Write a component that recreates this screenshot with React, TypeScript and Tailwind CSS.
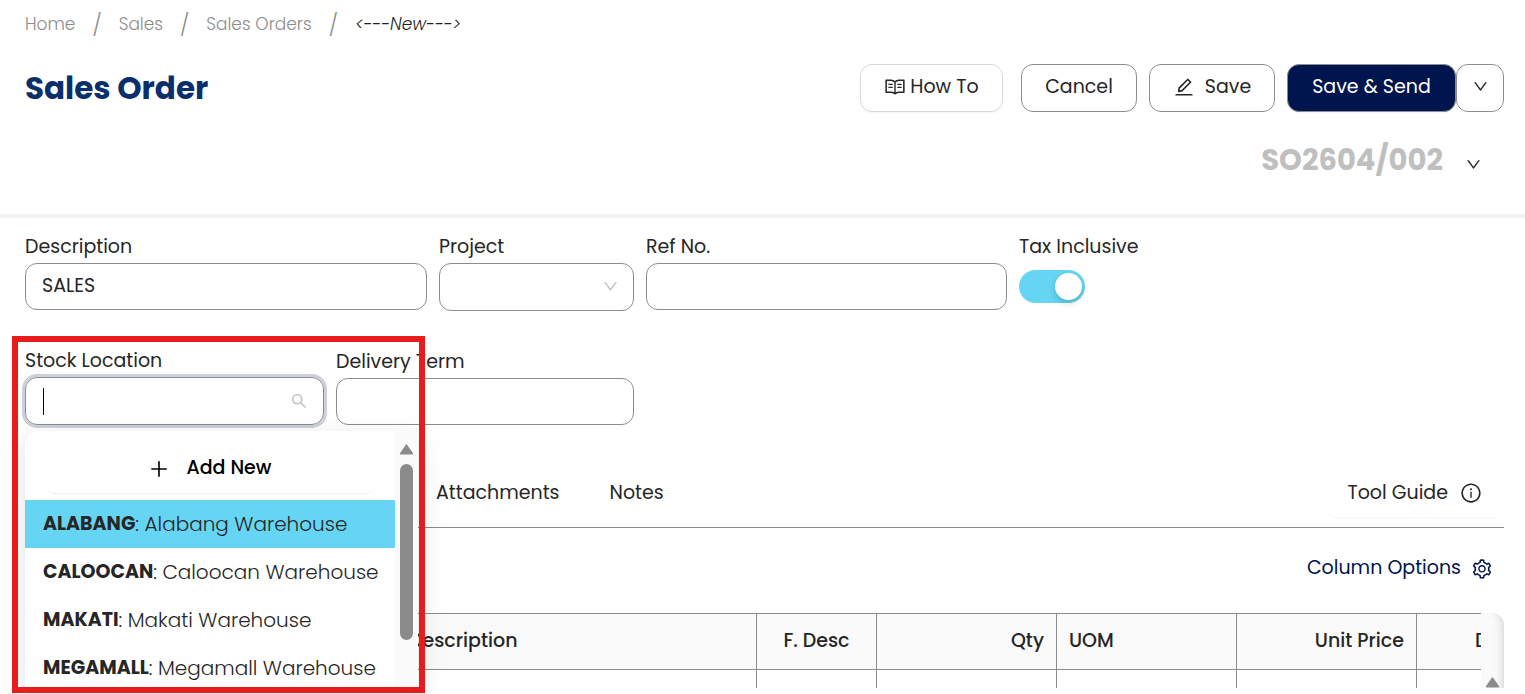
import type { ReactNode } from "react";
import {
  AiOutlineDown,
  AiOutlineEdit,
  AiOutlineInfoCircle,
  AiOutlinePlus,
  AiOutlineRead,
  AiOutlineSearch,
  AiOutlineSetting,
} from "react-icons/ai";

const crumbs = ["Home", "Sales", "Sales Orders"];

const warehouses = [
  { code: "ALABANG", name: "Alabang Warehouse" },
  { code: "CALOOCAN", name: "Caloocan Warehouse" },
  { code: "MAKATI", name: "Makati Warehouse" },
  { code: "MEGAMALL", name: "Megamall Warehouse" },
];

function Triangle() {
  return (
    <svg width="15" height="11" viewBox="0 0 15 11" aria-hidden="true">
      <path d="M7.5 1.2 13.4 9.6H1.6Z" fill="#8b8b8b" stroke="#8b8b8b" strokeWidth="1.6" strokeLinejoin="round" />
    </svg>
  );
}

function Field({ id, label, children }: { id: string; label: string; children: ReactNode }) {
  return (
    <div className="relative flex min-w-0 flex-col">
      <label htmlFor={id} className="mb-0.5 h-7 text-[19px] leading-7 whitespace-nowrap">
        {label}
      </label>
      {children}
    </div>
  );
}

const inputClass =
  "h-[47px] w-full rounded-xl border border-[#8c8c8c] bg-white px-4 pb-0.5 text-[19px] outline-none";

function PageHeader() {
  return (
    <header className="border-b-4 border-[#f2f2f2] pt-[13px] pr-[21px] pb-[30px] pl-[25px]">
      <nav aria-label="Breadcrumb">
        <ol className="flex h-6 items-center text-[17px] font-light text-[#8c8c8c]">
          {crumbs.map((c) => (
            <li key={c} className="flex items-center">
              <a href="#">{c}</a>
              <span className="mx-[17px] text-[21px] leading-6">/</span>
            </li>
          ))}
          <li className="text-[#1f1f1f] italic">&lt;---New---&gt;</li>
        </ol>
      </nav>
      <div className="mt-[27px] flex h-12 items-center">
        <h1 className="text-[31px] leading-10 font-bold text-[#0a2f6c]">Sales Order</h1>
        <div className="ml-auto flex text-[19px]">
          <button className="mr-[18px] flex h-12 w-[143px] items-center justify-center gap-1 rounded-xl border border-[#d9d9d9] pb-0.5 shadow-xs">
            <AiOutlineRead className="size-[22px]" />
            How To
          </button>
          <button className="mr-3 h-12 w-[116px] rounded-xl border border-[#8c8c8c] pb-0.5">Cancel</button>
          <button className="mr-3 flex h-12 w-[126px] items-center justify-center gap-2.5 rounded-xl border border-[#8c8c8c] pb-0.5">
            <AiOutlineEdit className="size-[22px]" />
            Save
          </button>
          <button className="h-12 w-[169px] rounded-xl border border-[#8c8c8c] bg-[#00154d] pb-0.5 text-white shadow-xs">
            Save &amp; Send
          </button>
          <button
            aria-label="More save options"
            className="flex h-12 w-12 items-center justify-center rounded-xl border border-[#8c8c8c] pb-1"
          >
            <AiOutlineDown className="size-[17px]" />
          </button>
        </div>
      </div>
      <div className="mt-6 flex h-12 items-center justify-end pr-[22px]">
        <span className="text-[29px] leading-10 font-bold text-[#bfbfbf]">SO2604/002</span>
        <button aria-label="Change number" className="ml-[22px] pt-2">
          <AiOutlineDown className="size-[17px]" />
        </button>
      </div>
    </header>
  );
}

function StockDropdown() {
  return (
    <div className="absolute top-full left-0 z-10 mt-1.5 flex h-[257px] w-[393px] overflow-hidden rounded-t-xl bg-white shadow-[0_6px_16px_rgba(0,0,0,0.06),0_9px_28px_8px_rgba(0,0,0,0.05)]">
      <div className="min-w-0 flex-1">
        <div className="px-[18px] pt-[14px] pb-[7px]">
          <button className="flex h-12 w-full items-center justify-center gap-4 rounded-xl pb-0.5 text-[19px] font-medium text-black shadow-[0_2px_1px_-1px_rgba(0,0,0,0.06)]">
            <AiOutlinePlus className="size-[22px] translate-y-px" />
            Add New
          </button>
        </div>
        <ul role="listbox" aria-label="Stock Location" className="text-xl font-light">
          {warehouses.map((w, i) => (
            <li
              key={w.code}
              role="option"
              aria-selected={i === 0}
              className="flex h-12 items-center pl-[18px] whitespace-pre aria-selected:bg-[#66d5f4]"
            >
              <strong className="text-[19px] font-bold">{w.code}</strong>: {w.name}
            </li>
          ))}
        </ul>
      </div>
      <div className="flex w-[23px] flex-col items-center gap-[9px] bg-[#fbfbfb] pt-[13px]">
        <Triangle />
        <div className="h-44 w-[13px] rounded-full bg-[#8b8b8b]" />
      </div>
    </div>
  );
}

function OrderForm() {
  return (
    <section className="pt-[15px]">
      <div className="grid grid-cols-[402fr_195fr_361fr_485fr] items-start gap-x-3">
        <Field id="description" label="Description">
          <input id="description" defaultValue="SALES" className={inputClass} />
        </Field>
        <Field id="project" label="Project">
          <div className="relative">
            <select
              id="project"
              defaultValue=""
              className="h-12 w-full appearance-none rounded-xl border border-[#8c8c8c] bg-white px-4 text-[19px]"
            >
              <option value="" />
            </select>
            <AiOutlineDown className="pointer-events-none absolute top-[15px] right-[15px] size-[17px] text-[#bfbfbf]" />
          </div>
        </Field>
        <Field id="ref-no" label="Ref No.">
          <input id="ref-no" className={inputClass} />
        </Field>
        <Field id="tax" label="Tax Inclusive">
          <input
            id="tax"
            type="checkbox"
            role="switch"
            defaultChecked
            className="mt-[7px] flex h-[33px] w-[66px] appearance-none items-center justify-end rounded-full bg-[#66d5f4] pr-[3px] before:size-[27px] before:rounded-full before:bg-white before:shadow-[0_3px_6px_rgba(0,35,11,0.2)]"
          />
        </Field>
      </div>
      <div className="mt-9 grid grid-cols-[299fr_298fr_858fr] items-end gap-x-3">
        <Field id="stock" label="Stock Location">
          <div className="flex h-12 items-center rounded-xl border border-[#8c8c8c] pr-[15px] pl-[17px] ring-3 ring-[#ccd0db]">
            <span className="h-[27px] w-px bg-black" />
            <input id="stock" className="min-w-0 flex-1 text-[19px] outline-none" />
            <AiOutlineSearch className="size-[18px] text-[#bfbfbf]" />
          </div>
          <StockDropdown />
        </Field>
        <Field id="delivery" label="Delivery Term">
          <input id="delivery" className={inputClass} />
        </Field>
      </div>
    </section>
  );
}

const cell = "border-y border-r border-[#8c8c8c] px-3 font-medium";

function OrderLines() {
  return (
    <section>
      <div className="mt-[34px] flex h-[69px] items-center border-b border-[#8c8c8c] text-[19px]">
        <div role="tablist" className="flex gap-[50px] pl-[411px]">
          <button role="tab">Attachments</button>
          <button role="tab">Notes</button>
        </div>
        <button className="ml-auto flex h-12 items-center gap-3 rounded-xl px-[22px] shadow-[0_2px_1px_-1px_rgba(0,0,0,0.04)]">
          Tool Guide
          <AiOutlineInfoCircle className="size-[22px]" />
        </button>
      </div>
      <div className="flex h-[85px] items-center justify-end pr-[11px] pb-1">
        <button className="flex items-center gap-2.5 text-[19px] text-[#00154d]">
          Column Options
          <AiOutlineSetting className="size-[22px]" />
        </button>
      </div>
      <div className="flex h-[75px] overflow-hidden">
        <div className="min-w-0 flex-1 overflow-hidden">
          <table className="w-[1572px] table-fixed border-separate border-spacing-0 text-[19px]">
            <colgroup>
              <col className="w-[372px]" />
              <col className="w-[360px]" />
              <col className="w-[120px]" />
              <col className="w-[180px]" />
              <col className="w-[180px]" />
              <col className="w-[180px]" />
              <col className="w-[180px]" />
            </colgroup>
            <thead className="bg-[#fafafa]">
              <tr className="h-[57px]">
                <th className={cell} />
                <th className={`${cell} text-left`}>Description</th>
                <th className={`${cell} text-center`}>F. Desc</th>
                <th className={`${cell} text-right`}>Qty</th>
                <th className={`${cell} text-left`}>UOM</th>
                <th className={`${cell} text-right`}>Unit Price</th>
                <th className="border-y border-[#8c8c8c] pl-[58px] text-left font-medium">D</th>
              </tr>
            </thead>
            <tbody>
              <tr className="h-12">
                {[0, 1, 2, 3, 4, 5, 6].map((i) => (
                  <td key={i} className="border-r border-[#8c8c8c]" />
                ))}
              </tr>
            </tbody>
          </table>
        </div>
        <div className="flex w-[23px] flex-col items-center rounded-tr-xl bg-[#fafafa] pt-16 shadow-[inset_-10px_0_8px_-8px_rgba(0,0,0,0.15)]">
          <Triangle />
        </div>
      </div>
    </section>
  );
}

export default function App() {
  return (
    <div className="relative bg-white font-['Poppins','Inter',sans-serif] text-[#262626]">
      <PageHeader />
      <main className="pr-[21px] pb-1.5 pl-[25px]">
        <OrderForm />
        <OrderLines />
      </main>
      <div className="pointer-events-none absolute top-[336px] left-3 z-20 h-[357px] w-[413px] border-6 border-[#e81c1c]" />
    </div>
  );
}
